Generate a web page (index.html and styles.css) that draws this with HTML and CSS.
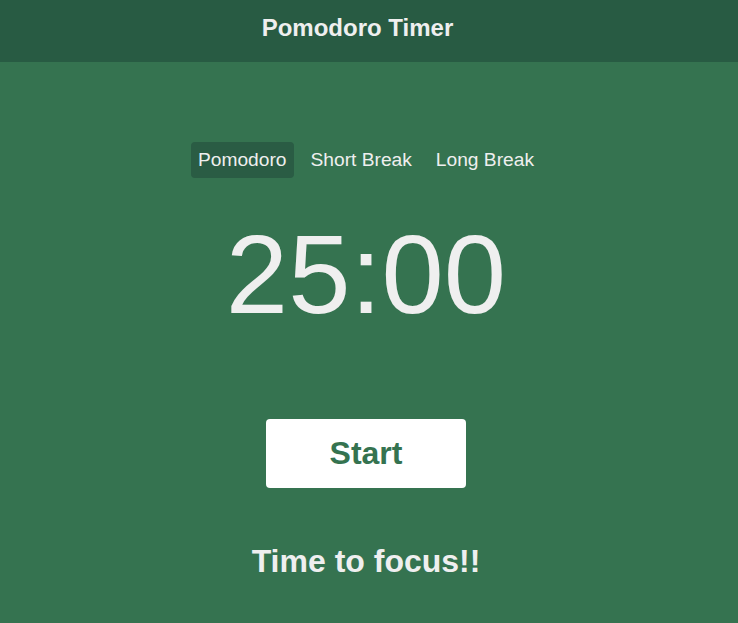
FILE: index.html
```html
<!DOCTYPE html>
<html lang="en">
<head>
<meta charset="utf-8">
<title>Pomodoro Timer</title>
<link rel="stylesheet" href="styles.css">
</head>
<body>
<header class="topbar">
  <h1 class="title">Pomodoro Timer</h1>
</header>
<main class="main">
  <nav class="tabs">
    <button class="tab active">Pomodoro</button>
    <button class="tab">Short Break</button>
    <button class="tab">Long Break</button>
  </nav>
  <div class="time">25:00</div>
  <button class="start">Start</button>
  <p class="message">Time to focus!!</p>
</main>
</body>
</html>
```
FILE: styles.css
```css
html, body {
  margin: 0;
  padding: 0;
  height: 100%;
}
body {
  background: #357350;
  color: #efefef;
  font-family: "Liberation Sans", Arial, sans-serif;
}
.topbar {
  background: #285b43;
  height: 62px;
  display: flex;
  align-items: center;
  justify-content: center;
  padding-right: 23px;
}
.title {
  margin: 0;
  font-size: 24px;
  font-weight: bold;
  color: #efefef;
  position: relative;
  top: -3px;
}
.main {
  display: flex;
  flex-direction: column;
  align-items: center;
  padding-top: 80px;
  padding-left: 0;
  padding-right: 6px;
}
.tabs {
  display: flex;
  gap: 10px;
}
.tab {
  font-family: "Liberation Sans", Arial, sans-serif;
  font-size: 19.2px;
  line-height: 22px;
  color: #efefef;
  background: transparent;
  border: none;
  border-radius: 4px;
  padding: 7px 7px;
  cursor: pointer;
}
.tab.active {
  background: #2a5c44;
}
.time {
  margin-top: 32px;
  font-size: 112px;
  color: #efefef;
  line-height: normal;
}
.start {
  margin-top: 80px;
  width: 200px;
  height: 69px;
  background: #ffffff;
  color: #357350;
  border: none;
  border-radius: 4px;
  font-family: "Liberation Sans", Arial, sans-serif;
  font-size: 32px;
  font-weight: bold;
  cursor: pointer;
}
.message {
  margin: 55px 0 0;
  font-size: 32px;
  font-weight: bold;
  color: #efefef;
}
```
